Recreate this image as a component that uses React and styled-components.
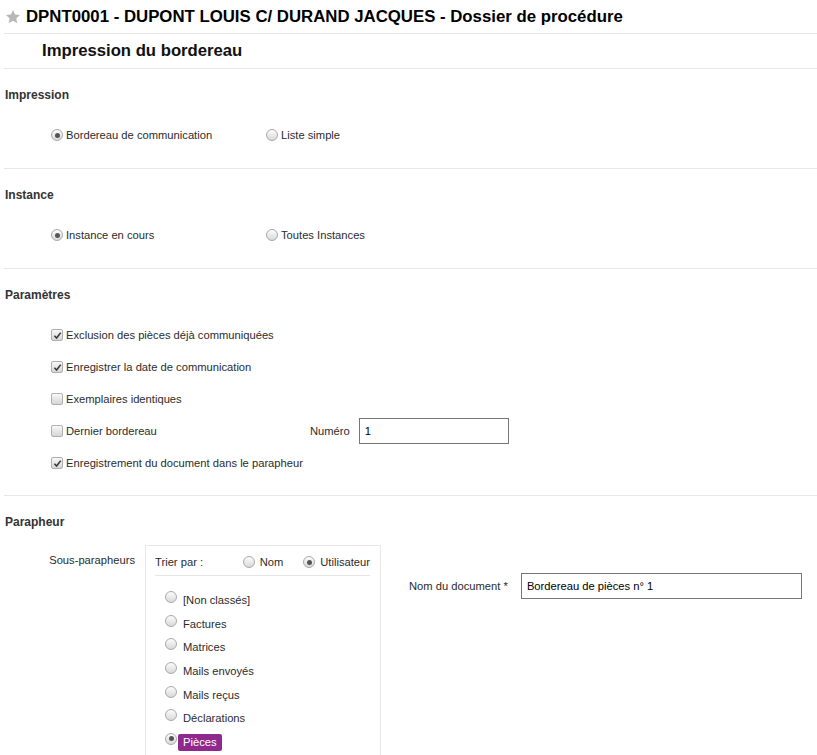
import React from 'react';
import styled, { createGlobalStyle } from 'styled-components';

const GlobalStyle = createGlobalStyle`
  html, body {
    margin: 0;
    padding: 0;
    background: #fff;
  }
  body {
    font-family: "Liberation Sans", Arial, sans-serif;
    color: #333;
  }
`;

const Page = styled.div`
  padding-left: 4px;
`;

const TitleBar = styled.div`
  display: flex;
  align-items: center;
  gap: 5px;
  height: 33px;
  padding-left: 1px;
  border-bottom: 1px solid #e8e8e8;
`;

const Title = styled.h1`
  margin: 0;
  font-size: 16.8px;
  font-weight: bold;
  color: #000;
`;

const SubTitle = styled.h2`
  display: flex;
  align-items: center;
  height: 34px;
  margin: 0;
  padding-left: 38px;
  font-size: 16.7px;
  font-weight: bold;
  color: #111;
  border-bottom: 1px solid #e8e8e8;
`;

const Section = styled.section`
  padding: 18px 0 ${(p) => p.$pb ?? 23}px;
  border-bottom: ${(p) => (p.$last ? 'none' : '1px solid #e8e8e8')};
`;

const SectionTitle = styled.h3`
  margin: 0;
  padding-left: 1px;
  font-size: 12px;
  line-height: 16px;
  font-weight: bold;
  color: #333;
`;

const RadioRow = styled.div`
  display: flex;
  align-items: center;
  height: 20px;
  margin: 22px 0 0 47px;
`;

const Option = styled.label`
  display: flex;
  align-items: center;
  width: ${(p) => (p.$w ? `${p.$w}px` : 'auto')};
  flex-shrink: 0;
`;

const Radio = styled.span`
  position: relative;
  box-sizing: border-box;
  width: 12px;
  height: 12px;
  flex-shrink: 0;
  border: 1px solid #a9a9a9;
  border-radius: 50%;
  background: linear-gradient(#fcfcfc, #d9d9d9);
  margin-top: ${(p) => p.$top || 0}px;

  &::after {
    content: '';
    display: ${(p) => (p.$on ? 'block' : 'none')};
    position: absolute;
    top: 2.5px;
    left: 2.5px;
    width: 5px;
    height: 5px;
    border-radius: 50%;
    background: #555;
  }
`;

const Check = styled.span`
  display: flex;
  align-items: center;
  justify-content: center;
  box-sizing: border-box;
  width: 12px;
  height: 12px;
  flex-shrink: 0;
  border: 1px solid #b0b0b0;
  border-radius: 2px;
  background: linear-gradient(#f8f8f8, #d6d6d6);
`;

const Text = styled.span`
  margin-left: ${(p) => p.$gap ?? 3}px;
  font-size: 11.2px;
  color: #2b2b2b;
  white-space: nowrap;
`;

const CheckList = styled.div`
  margin: 16px 0 0 47px;
`;

const CheckRow = styled.div`
  display: flex;
  align-items: center;
  height: 32px;
`;

const FieldLabel = styled.span`
  font-size: 11.2px;
  color: #2b2b2b;
  margin-right: ${(p) => p.$mr}px;
  white-space: nowrap;
`;

const TextInput = styled.div`
  box-sizing: border-box;
  display: flex;
  align-items: center;
  width: ${(p) => p.$w}px;
  height: 26px;
  padding: 0 5px;
  border: 1px solid #767676;
  font-size: 11.2px;
  color: #000;
`;

const ParaRow = styled.div`
  display: flex;
  align-items: flex-start;
  margin-top: 15px;
`;

const SideLabel = styled.div`
  width: 131px;
  margin-right: 10px;
  padding-top: 9px;
  text-align: right;
  font-size: 11.2px;
  line-height: 13px;
  color: #2b2b2b;
`;

const Box = styled.div`
  box-sizing: border-box;
  width: 236px;
  padding: 0 10px 20px 9px;
  border: 1px solid #e8e8e8;
  border-bottom: none;
`;

const BoxHeader = styled.div`
  display: flex;
  align-items: center;
  justify-content: space-between;
  padding: 9px 0 6px;
  line-height: 14px;
  border-bottom: 1px solid #e6e6e6;
`;

const SortOptions = styled.div`
  display: flex;
  align-items: center;
  gap: 20px;
`;

const FolderList = styled.div`
  padding: 13px 0 0 10px;
`;

const FolderItem = styled.div`
  display: flex;
  align-items: flex-start;
  height: 23.67px;
`;

const FolderName = styled.span`
  margin: 3px 0 0 1px;
  padding: 0 5px;
  line-height: 17px;
  border-radius: 2px;
  font-size: 11.2px;
  white-space: nowrap;
  color: ${(p) => (p.$on ? '#fff' : '#2b2b2b')};
  background: ${(p) => (p.$on ? '#8e2a8c' : 'transparent')};
`;

const DocField = styled.div`
  display: flex;
  align-items: center;
  margin: 28px 0 0 28px;
`;

const Star = () => (
  <svg width="16" height="16" viewBox="0 0 24 24">
    <path
      d="M12 1.5l3.1 6.9 7.4.7-5.6 5 1.7 7.4L12 17.6l-6.6 3.9 1.7-7.4-5.6-5 7.4-.7z"
      fill="#b8b8b8"
    />
  </svg>
);

const CheckBox = ({ on }) => (
  <Check>
    {on && (
      <svg width="9" height="9" viewBox="0 0 10 10">
        <path d="M1.5 5.3 L4 7.8 L8.6 1.8" stroke="#3a3a3a" strokeWidth="1.8" fill="none" />
      </svg>
    )}
  </Check>
);

const folders = [
  '[Non classés]',
  'Factures',
  'Matrices',
  'Mails envoyés',
  'Mails reçus',
  'Déclarations',
  'Pièces',
];

export default function App() {
  return (
    <Page>
      <GlobalStyle />
      <TitleBar>
        <Star />
        <Title>DPNT0001 - DUPONT LOUIS C/ DURAND JACQUES - Dossier de procédure</Title>
      </TitleBar>
      <SubTitle>Impression du bordereau</SubTitle>

      <Section>
        <SectionTitle>Impression</SectionTitle>
        <RadioRow>
          <Option $w={215}>
            <Radio $on />
            <Text>Bordereau de communication</Text>
          </Option>
          <Option>
            <Radio />
            <Text>Liste simple</Text>
          </Option>
        </RadioRow>
      </Section>

      <Section>
        <SectionTitle>Instance</SectionTitle>
        <RadioRow>
          <Option $w={215}>
            <Radio $on />
            <Text>Instance en cours</Text>
          </Option>
          <Option>
            <Radio />
            <Text>Toutes Instances</Text>
          </Option>
        </RadioRow>
      </Section>

      <Section $pb={16}>
        <SectionTitle>Paramètres</SectionTitle>
        <CheckList>
          <CheckRow>
            <CheckBox on />
            <Text>Exclusion des pièces déjà communiquées</Text>
          </CheckRow>
          <CheckRow>
            <CheckBox on />
            <Text>Enregistrer la date de communication</Text>
          </CheckRow>
          <CheckRow>
            <CheckBox />
            <Text>Exemplaires identiques</Text>
          </CheckRow>
          <CheckRow>
            <Option $w={259}>
              <CheckBox />
              <Text>Dernier bordereau</Text>
            </Option>
            <FieldLabel $mr={9}>Numéro</FieldLabel>
            <TextInput $w={150}>1</TextInput>
          </CheckRow>
          <CheckRow>
            <CheckBox on />
            <Text>Enregistrement du document dans le parapheur</Text>
          </CheckRow>
        </CheckList>
      </Section>

      <Section $last $pb={0}>
        <SectionTitle>Parapheur</SectionTitle>
        <ParaRow>
          <SideLabel>Sous-parapheurs</SideLabel>
          <Box>
            <BoxHeader>
              <Text $gap={0}>Trier par :</Text>
              <SortOptions>
                <Option>
                  <Radio />
                  <Text $gap={5}>Nom</Text>
                </Option>
                <Option>
                  <Radio $on />
                  <Text $gap={5}>Utilisateur</Text>
                </Option>
              </SortOptions>
            </BoxHeader>
            <FolderList>
              {folders.map((f) => (
                <FolderItem key={f}>
                  <Radio $on={f === 'Pièces'} $top={2} />
                  <FolderName $on={f === 'Pièces'}>{f}</FolderName>
                </FolderItem>
              ))}
            </FolderList>
          </Box>
          <DocField>
            <FieldLabel $mr={13}>Nom du document *</FieldLabel>
            <TextInput $w={281}>Bordereau de pièces n° 1</TextInput>
          </DocField>
        </ParaRow>
      </Section>
    </Page>
  );
}
